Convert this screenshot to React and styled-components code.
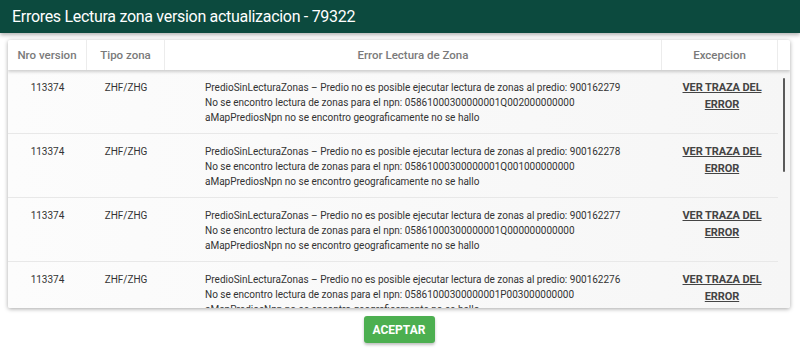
import React from 'react';
import styled, { createGlobalStyle } from 'styled-components';

const GlobalStyle = createGlobalStyle`
  html, body {
    margin: 0;
    padding: 0;
    background: #ffffff;
    font-family: Roboto, "Liberation Sans", sans-serif;
  }
`;

const COLS = '79px 78px 497px 116px';

const Dialog = styled.div`
  width: 800px;
  height: 354px;
  display: flex;
  flex-direction: column;
  background: #ffffff;
  overflow: hidden;
`;

const TitleBar = styled.div`
  height: 33px;
  flex-shrink: 0;
  display: flex;
  align-items: center;
  padding: 0 12px;
  background: #0c4a3e;
  color: #ffffff;
  font-size: 16px;
  letter-spacing: -0.3px;
  box-shadow: 0 2px 4px rgba(0, 0, 0, 0.3);
`;

const Body = styled.div`
  display: flex;
  flex-direction: column;
  align-items: center;
  padding: 7px 10px 0 8px;
`;

const Card = styled.div`
  width: 782px;
  height: 268px;
  display: flex;
  flex-direction: column;
  background: #fafafa;
  border-radius: 2px;
  box-shadow: 0 1px 4px rgba(0, 0, 0, 0.35);
  overflow: hidden;
`;

const HeadRow = styled.div`
  display: grid;
  grid-template-columns: ${COLS} 12px;
  height: 30px;
  flex-shrink: 0;
  background: #ffffff;
  box-shadow: 0 2px 3px rgba(0, 0, 0, 0.18);
  position: relative;
  z-index: 1;
`;

const HeadCell = styled.div`
  display: flex;
  align-items: center;
  justify-content: center;
  font-size: 11.5px;
  font-weight: 500;
  color: #7a7a7a;
  border-right: ${p => (p.last ? 'none' : '1px solid #ececec')};
`;

const TableBody = styled.div`
  flex: 1;
  display: flex;
  min-height: 0;
  background: linear-gradient(to right, #fcfcfc, #f6f6f6);
`;

const Rows = styled.div`
  width: 770px;
  overflow: hidden;
`;

const ScrollTrack = styled.div`
  width: 12px;
  display: flex;
  justify-content: center;
  padding-top: 8px;
`;

const ScrollThumb = styled.div`
  width: 2px;
  height: 94px;
  background: #5a5a5a;
  border-radius: 1px;
`;

const Row = styled.div`
  display: grid;
  grid-template-columns: ${COLS};
  height: 64px;
  border-bottom: 1px solid #e8e8e8;
  box-sizing: border-box;
  font-size: 10px;
  color: #333;
`;

const Cell = styled.div`
  padding-top: 10px;
  text-align: ${p => p.align || 'center'};
  padding-left: ${p => p.pad || 0}px;
  line-height: 15px;
`;

const ErrorLine = styled.div`
  white-space: nowrap;
`;

const TraceLink = styled.a`
  display: inline-block;
  font-weight: 700;
  font-size: 11px;
  line-height: 17px;
  letter-spacing: -0.1px;
  color: #444;
  text-decoration: underline;
  cursor: pointer;
  margin-top: -1px;
  margin-left: 4px;
`;

const Footer = styled.div`
  display: flex;
  justify-content: center;
  padding-top: 8px;
`;

const AcceptButton = styled.button`
  width: 71px;
  height: 27px;
  border: none;
  border-radius: 3px;
  background: #4caf50;
  color: #ffffff;
  font-family: Roboto, "Liberation Sans", sans-serif;
  font-size: 12px;
  font-weight: 700;
  box-shadow: 0 2px 3px rgba(0, 0, 0, 0.25);
  cursor: pointer;
`;

const rows = [
  { predio: '900162279', npn: '05861000300000001Q002000000000' },
  { predio: '900162278', npn: '05861000300000001Q001000000000' },
  { predio: '900162277', npn: '05861000300000001Q000000000000' },
  { predio: '900162276', npn: '05861000300000001P003000000000' },
];

const App = () => (
  <>
    <GlobalStyle />
    <Dialog>
      <TitleBar>Errores Lectura zona version actualizacion - 79322</TitleBar>
      <Body>
        <Card>
          <HeadRow>
            <HeadCell>Nro version</HeadCell>
            <HeadCell>Tipo zona</HeadCell>
            <HeadCell>Error Lectura de Zona</HeadCell>
            <HeadCell>Excepcion</HeadCell>
            <HeadCell last />
          </HeadRow>
          <TableBody>
            <Rows>
              {rows.map(r => (
                <Row key={r.predio}>
                  <Cell>113374</Cell>
                  <Cell>ZHF/ZHG</Cell>
                  <Cell align="left" pad={40}>
                    <ErrorLine>
                      PredioSinLecturaZonas – Predio no es posible ejecutar lectura de zonas al predio: {r.predio}
                    </ErrorLine>
                    <ErrorLine>No se encontro lectura de zonas para el npn: {r.npn}</ErrorLine>
                    <ErrorLine>aMapPrediosNpn no se encontro geograficamente no se hallo</ErrorLine>
                  </Cell>
                  <Cell>
                    <TraceLink>VER TRAZA DEL<br />ERROR</TraceLink>
                  </Cell>
                </Row>
              ))}
            </Rows>
            <ScrollTrack>
              <ScrollThumb />
            </ScrollTrack>
          </TableBody>
        </Card>
        <Footer>
          <AcceptButton>ACEPTAR</AcceptButton>
        </Footer>
      </Body>
    </Dialog>
  </>
);

export default App;
